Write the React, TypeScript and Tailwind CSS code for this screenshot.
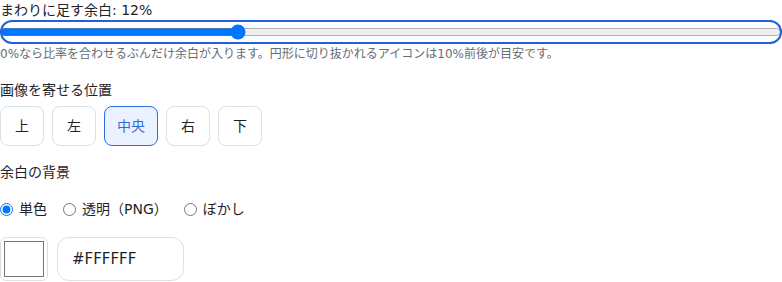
import React, { useState } from 'react';

const positions = ['上', '左', '中央', '右', '下'];
const backgrounds = [
  { id: 'solid', label: '単色' },
  { id: 'transparent', label: '透明（PNG）' },
  { id: 'blur', label: 'ぼかし' },
];

export default function App() {
  const [padding, setPadding] = useState(12);
  const [pos, setPos] = useState('中央');
  const [bg, setBg] = useState('solid');
  const [color, setColor] = useState('#FFFFFF');

  return (
    <div
      className="w-[782px] bg-white text-[#1f2328] text-[14px]"
      style={{ fontFamily: '"DejaVu Sans", "Noto Sans CJK JP", sans-serif' }}
    >
      <label className="block leading-[20px]">まわりに足す余白: {padding}%</label>
      <input
        type="range"
        min={0}
        max={40}
        value={padding}
        onChange={(e) => setPadding(Number(e.target.value))}
        className="block w-full h-6 rounded-xl outline-2 -outline-offset-2 outline-[#1f5fe0]"
      />
      <p className="mt-[2px] text-[12px] leading-4 text-[#666b73]">
        0%なら比率を合わせるぶんだけ余白が入ります。円形に切り抜かれるアイコンは10%前後が目安です。
      </p>

      <div className="mt-[18px] leading-[20px]">画像を寄せる位置</div>
      <div className="mt-[6px] flex gap-2">
        {positions.map((p) => (
          <button
            key={p}
            onClick={() => setPos(p)}
            className={
              pos === p
                ? 'h-10 min-w-[44px] px-3 rounded-lg border border-[#2f6be0] bg-[#eaf2ff] text-[#2f6be0] leading-none'
                : 'h-10 min-w-[44px] px-3 rounded-lg border border-[#d8e0ea] bg-white text-[#1f2328] leading-none'
            }
          >
            {p}
          </button>
        ))}
      </div>

      <div className="mt-4 leading-[20px]">余白の背景</div>
      <div className="mt-[17px] flex items-center gap-4 h-5">
        {backgrounds.map((b) => (
          <label key={b.id} className="flex items-center gap-[6px]">
            <input
              type="radio"
              name="bg"
              checked={bg === b.id}
              onChange={() => setBg(b.id)}
              className="w-[13px] h-[13px]"
            />
            <span>{b.label}</span>
          </label>
        ))}
      </div>

      <div className="mt-[18px] flex gap-[9px]">
        <div className="w-12 h-11 p-[3px] rounded-md border border-[#d8e0ea] bg-white">
          <div className="w-full h-full border border-[#767676]" style={{ backgroundColor: color }} />
        </div>
        <input
          type="text"
          value={color}
          onChange={(e) => setColor(e.target.value)}
          className="w-[127px] h-11 px-[14px] rounded-xl border border-[#d8e0ea] text-[15px] text-[#1f2328] outline-none"
        />
      </div>
    </div>
  );
}
